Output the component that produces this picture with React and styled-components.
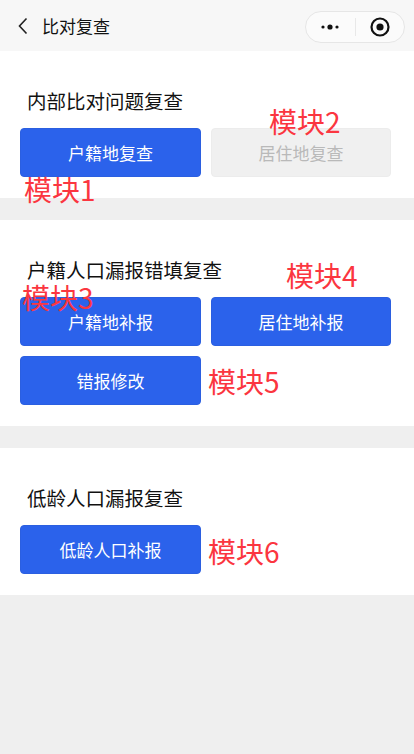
import React from "react";
import styled, { createGlobalStyle } from "styled-components";

const Global = createGlobalStyle`
  html, body { margin: 0; padding: 0; background: #efefef; }
  body { font-family: "Noto Sans CJK SC", "Noto Sans", sans-serif; }
  * { box-sizing: border-box; }
`;

const Page = styled.div`
  position: relative;
  width: 414px;
  min-height: 754px;
  background: #efefef;
`;

const NavBar = styled.div`
  height: 51px;
  background: #f7f7f7;
  display: flex;
  align-items: center;
  padding: 0 9px 0 13px;
`;

const BackBtn = styled.div`
  width: 20px;
  height: 20px;
  display: flex;
  align-items: center;
  justify-content: center;
  margin-right: 9px;
  margin-top: 1px;
`;

const NavTitle = styled.div`
  flex: 1;
  font-size: 17px;
  color: #111;
  line-height: 24px;
  margin-top: 1px;
`;

const Capsule = styled.div`
  width: 100px;
  height: 32px;
  border: 1px solid #e6e6e6;
  border-radius: 16px;
  background: #fbfbfb;
  display: flex;
  align-items: center;
  margin-top: 2px;
`;

const CapsuleHalf = styled.div`
  flex: 1;
  height: 100%;
  display: flex;
  align-items: center;
  justify-content: center;
`;

const CapsuleDivider = styled.div`
  width: 1px;
  height: 18px;
  background: #e8e8e8;
`;

const Section = styled.div`
  background: #fff;
  padding: 38px 23px 21px 20px;
  margin-bottom: ${(p) => p.$gap}px;
`;

const SectionTitle = styled.div`
  font-size: 19.5px;
  line-height: 24px;
  color: #111;
  padding-left: 7px;
  margin-bottom: 15px;
`;

const ButtonGrid = styled.div`
  display: grid;
  grid-template-columns: 181px 180px;
  gap: 10px;
`;

const Btn = styled.div`
  height: 49px;
  border-radius: 4px;
  display: flex;
  align-items: center;
  justify-content: center;
  font-size: 17px;
  background: ${(p) => (p.$disabled ? "#f0f0f0" : "#2b62eb")};
  color: ${(p) => (p.$disabled ? "#b9b9b9" : "#fff")};
  border: 1px solid ${(p) => (p.$disabled ? "#ececec" : "#2b5fe0")};
`;

const Tag = styled.div`
  position: absolute;
  font-size: 28px;
  line-height: 28px;
  color: #fb3640;
  white-space: nowrap;
  pointer-events: none;
`;

const tags = [
  { t: "模块1", x: 24, y: 175 },
  { t: "模块2", x: 269, y: 107 },
  { t: "模块3", x: 22, y: 283 },
  { t: "模块4", x: 286, y: 261 },
  { t: "模块5", x: 208, y: 367 },
  { t: "模块6", x: 208, y: 537 },
];

export default function App() {
  return (
    <Page>
      <Global />
      <NavBar>
        <BackBtn>
          <svg width="12" height="18" viewBox="0 0 12 18">
            <path d="M9.5 1.5 L2.5 9 L9.5 16.5" fill="none" stroke="#222" strokeWidth="1.6" />
          </svg>
        </BackBtn>
        <NavTitle>比对复查</NavTitle>
        <Capsule>
          <CapsuleHalf>
            <svg width="20" height="8" viewBox="0 0 20 8">
              <circle cx="3" cy="4" r="1.6" fill="#111" />
              <circle cx="10" cy="4" r="2.6" fill="#111" />
              <circle cx="17" cy="4" r="1.6" fill="#111" />
            </svg>
          </CapsuleHalf>
          <CapsuleDivider />
          <CapsuleHalf>
            <svg width="22" height="22" viewBox="0 0 22 22">
              <circle cx="11" cy="11" r="8.5" fill="none" stroke="#111" strokeWidth="2.2" />
              <circle cx="11" cy="11" r="3.6" fill="#111" />
            </svg>
          </CapsuleHalf>
        </Capsule>
      </NavBar>

      <Section $gap={22}>
        <SectionTitle>内部比对问题复查</SectionTitle>
        <ButtonGrid>
          <Btn>户籍地复查</Btn>
          <Btn $disabled>居住地复查</Btn>
        </ButtonGrid>
      </Section>

      <Section $gap={22}>
        <SectionTitle>户籍人口漏报错填复查</SectionTitle>
        <ButtonGrid>
          <Btn>户籍地补报</Btn>
          <Btn>居住地补报</Btn>
          <Btn>错报修改</Btn>
        </ButtonGrid>
      </Section>

      <Section $gap={0}>
        <SectionTitle>低龄人口漏报复查</SectionTitle>
        <ButtonGrid>
          <Btn>低龄人口补报</Btn>
        </ButtonGrid>
      </Section>

      {tags.map((g) => (
        <Tag key={g.t} style={{ left: g.x, top: g.y }}>
          {g.t}
        </Tag>
      ))}
    </Page>
  );
}
